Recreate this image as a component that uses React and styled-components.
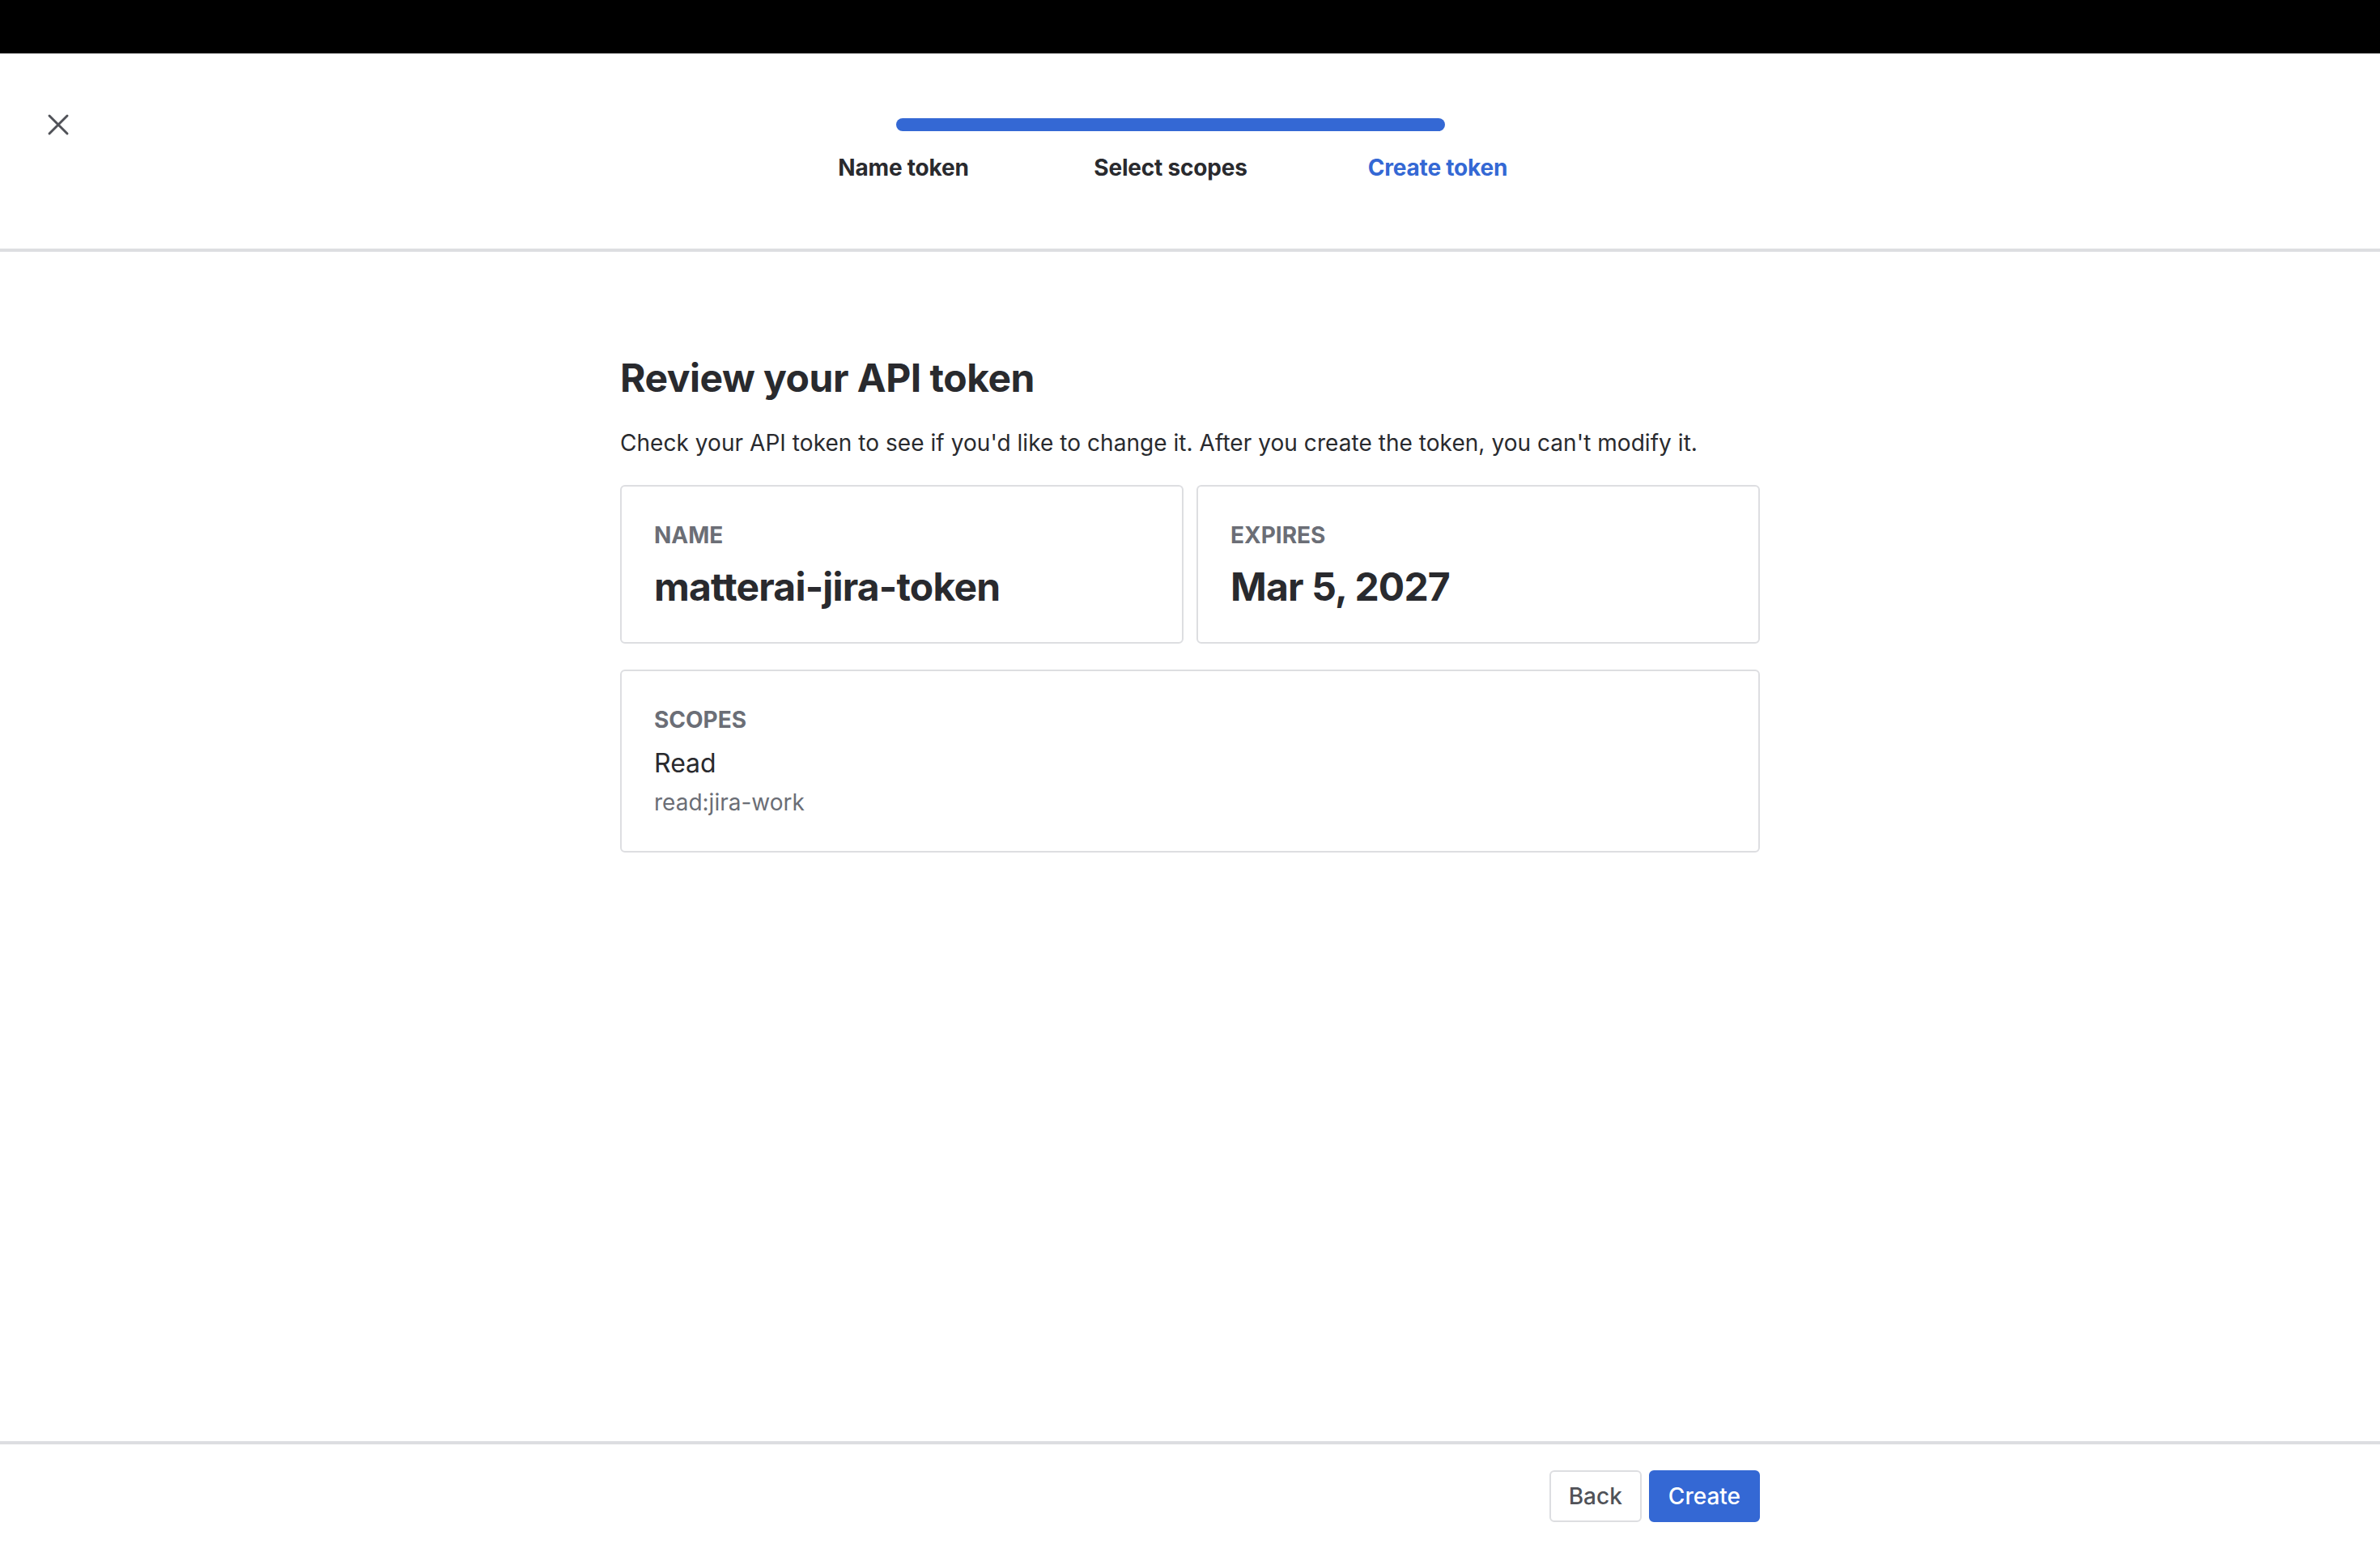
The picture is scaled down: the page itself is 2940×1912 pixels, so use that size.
import React from "react";
import styled, { createGlobalStyle } from "styled-components";

const GlobalStyle = createGlobalStyle`
	html, body {
		margin: 0;
		padding: 0;
		background: #ffffff;
	}
	body {
		font-family: Inter, "Noto Sans", "Liberation Sans", sans-serif;
		color: #292a2e;
		-webkit-font-smoothing: antialiased;
	}
	* {
		box-sizing: border-box;
	}
`;

const steps = [
	{ id: "name", label: "Name token" },
	{ id: "scopes", label: "Select scopes" },
	{ id: "create", label: "Create token", current: true },
];

const CloseIcon = () => (
	<svg width="48" height="48" viewBox="0 0 48 48" fill="none">
		<path d="M13 13L35 35M35 13L13 35" stroke="#505258" strokeWidth="3" strokeLinecap="round" />
	</svg>
);

const App = () => {
	return (
		<Page>
			<GlobalStyle />
			<TopBar />
			<Header>
				<CloseButton aria-label="Close">
					<CloseIcon />
				</CloseButton>
				<Tracker>
					<ProgressBar />
					<StepList>
						{steps.map((step) => (
							<Step key={step.id} current={step.current}>
								{step.label}
							</Step>
						))}
					</StepList>
				</Tracker>
				<div />
			</Header>
			<Main>
				<Content>
					<Title>Review your API token</Title>
					<Intro>
						Check your API token to see if you'd like to change it. After you create the token, you can't modify
						it.
					</Intro>
					<CardRow>
						<Card>
							<Label>Name</Label>
							<BigValue>matterai-jira-token</BigValue>
						</Card>
						<Card>
							<Label>Expires</Label>
							<BigValue>Mar 5, 2027</BigValue>
						</Card>
					</CardRow>
					<ScopeCard>
						<Label>Scopes</Label>
						<ScopeName>Read</ScopeName>
						<ScopeKey>read:jira-work</ScopeKey>
					</ScopeCard>
				</Content>
			</Main>
			<Footer>
				<FooterInner>
					<Button>Back</Button>
					<Button primary>Create</Button>
				</FooterInner>
			</Footer>
		</Page>
	);
};

const Page = styled.div`
	display: flex;
	flex-direction: column;
	min-height: 100vh;
`;

const TopBar = styled.div`
	height: 66px;
	background: #000000;
	flex-shrink: 0;
`;

const Header = styled.header`
	display: grid;
	grid-template-columns: 144px 1fr 192px;
	align-items: start;
	padding: 64px 0 80px;
	border-bottom: 4px solid #dddee1;
`;

const CloseButton = styled.button`
	display: flex;
	align-items: center;
	justify-content: center;
	width: 48px;
	height: 48px;
	margin-left: 48px;
	padding: 0;
	background: none;
	border: none;
	cursor: pointer;
`;

const Tracker = styled.div`
	display: flex;
	flex-direction: column;
	align-items: center;
	padding-top: 16px;
`;

const ProgressBar = styled.div`
	width: 678px;
	height: 16px;
	border-radius: 8px;
	background: #3468d4;
`;

const StepList = styled.div`
	display: grid;
	grid-template-columns: repeat(3, 330px);
	margin-top: 25px;
`;

const Step = styled.div`
	text-align: center;
	font-size: 28px;
	line-height: 40px;
	font-weight: 700;
	letter-spacing: -0.2px;
	color: ${(p) => (p.current ? "#3468d4" : "#292a2e")};
`;

const Main = styled.main`
	flex: 1;
`;

const Content = styled.div`
	width: 1408px;
	margin: 0 auto;
	padding-top: 128px;
`;

const Title = styled.h1`
	margin: 0;
	font-size: 48px;
	line-height: 56px;
	font-weight: 700;
	letter-spacing: -0.5px;
	color: #292a2e;
`;

const Intro = styled.p`
	margin: 32px 0 0;
	font-size: 28px;
	line-height: 40px;
	letter-spacing: 0.05px;
	color: #292a2e;
`;

const CardRow = styled.div`
	display: grid;
	grid-template-columns: 1fr 1fr;
	gap: 16px;
	margin-top: 32px;
`;

const Card = styled.div`
	border: 2px solid #dddee1;
	border-radius: 6px;
	padding: 40px;
`;

const ScopeCard = styled(Card)`
	margin-top: 32px;
`;

const Label = styled.div`
	font-size: 28px;
	line-height: 40px;
	font-weight: 700;
	text-transform: uppercase;
	color: #6b6e76;
`;

const BigValue = styled.div`
	margin-top: 16px;
	font-size: 48px;
	line-height: 56px;
	font-weight: 700;
	letter-spacing: -0.8px;
	color: #292a2e;
`;

const ScopeName = styled.div`
	margin-top: 10px;
	font-size: 32px;
	line-height: 48px;
	color: #292a2e;
`;

const ScopeKey = styled.div`
	margin-top: 4px;
	font-size: 28px;
	line-height: 40px;
	color: #6b6e76;
`;

const Footer = styled.footer`
	border-top: 4px solid #dddee1;
	flex-shrink: 0;
`;

const FooterInner = styled.div`
	display: flex;
	justify-content: flex-end;
	align-items: center;
	gap: 9px;
	width: 1408px;
	height: 128px;
	margin: 0 auto;
`;

const Button = styled.button`
	height: 64px;
	padding: 0 22px;
	border-radius: 6px;
	border: 2px solid ${(p) => (p.primary ? "#3468d4" : "#dddee1")};
	background: ${(p) => (p.primary ? "#3468d4" : "#ffffff")};
	color: ${(p) => (p.primary ? "#ffffff" : "#505258")};
	font-family: Inter, "Noto Sans", "Liberation Sans", sans-serif;
	font-size: 28px;
	font-weight: 500;
	cursor: pointer;
`;

export default App;
